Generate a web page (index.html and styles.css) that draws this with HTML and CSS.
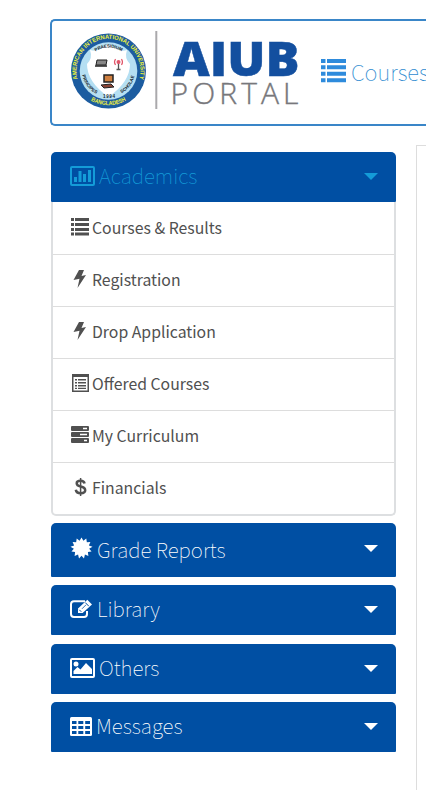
FILE: index.html
```html
<!DOCTYPE html>
<html lang="en">
<head>
<meta charset="utf-8">
<title>AIUB Portal</title>
<link rel="stylesheet" href="styles.css">
</head>
<body>
<header class="navbar">
  <svg class="brand" viewBox="68 28 236 84" role="img" aria-label="AIUB Portal">
    <defs>
      <path id="ring-top" d="M78.500 82A32 32 0 1 1 138.500 82"/>
      <path id="ring-bottom" d="M83.500 94.500A34.500 34.500 0 0 0 133.500 94.500"/>
      <path id="inner-top" d="M92 54.500A23 23 0 0 1 125 54.500"/>
      <path id="inner-left" d="M82 72A27 27 0 0 0 99 95"/>
      <path id="inner-right" d="M118 95A27 27 0 0 0 135 72"/>
    </defs>
    <circle cx="108.500" cy="71" r="37.500" fill="#1c5ca0"/>
    <circle cx="108.500" cy="71" r="28.800" fill="#b5dff2"/>
    <path d="M108.500 44L115 48Q121 52 127 50Q124 58 130 64Q130 82 108.500 97Q87 82 87 64Q93 58 90 50Q97 52 102 48Z" fill="#fff"/>
    <text class="ring"><textPath href="#ring-top" startOffset="50%" text-anchor="middle" textLength="117" lengthAdjust="spacingAndGlyphs">AMERICAN INTERNATIONAL UNIVERSITY</textPath></text>
    <text class="ring"><textPath href="#ring-bottom" startOffset="50%" text-anchor="middle" textLength="37" lengthAdjust="spacingAndGlyphs">BANGLADESH</textPath></text>
    <text class="motto"><textPath href="#inner-top" startOffset="50%" text-anchor="middle" textLength="27">PRAESIDIUM</textPath></text>
    <text class="motto"><textPath href="#inner-left" startOffset="50%" text-anchor="middle" textLength="24">PRINCIPES</textPath></text>
    <text class="motto"><textPath href="#inner-right" startOffset="50%" text-anchor="middle" textLength="22">SCHOLAE</textPath></text>
    <text class="motto" x="103" y="98" textLength="12">1994</text>
    <path d="M97 60h10l-1 5h-10z" fill="#888" stroke="#222"/><path d="M95 66h12" stroke="#222" stroke-width="1.600"/>
    <path d="M118.500 62v8M116.500 69.500h4" stroke="#555" stroke-width="1.300"/>
    <circle cx="118.500" cy="62" r="2" fill="#e0566a"/><path d="M115.500 59q-2 3 0 6M121.500 59q2 3 0 6" fill="none" stroke="#e0566a" stroke-width="1.200"/>
    <path d="M104 75h9v7h-9z" fill="#d08040" stroke="#222" stroke-width="1.500"/><path d="M101 85l10-1 3 3-10 1z" fill="#8b4434" stroke="#222"/>
    <path d="M156.300 31v78" stroke="#aaa9ac" stroke-width="2"/>
    <text class="logo-name" x="173" y="75.500" textLength="126.500" lengthAdjust="spacingAndGlyphs">AIUB</text>
    <text class="logo-sub" x="170.500" y="103.500" textLength="128">PORTAL</text>
  </svg>
  <a class="nav-link">
    <svg class="nav-icon" viewBox="0 0 25 24" fill="#2e8bdc"><path d="M0 0h4.500v4H0zM6 0h19v4H6zM0 6.300h4.500v4H0zM6 6.300h19v4H6zM0 12.800h4.500v4H0zM6 12.800h19v4H6zM0 19.300h4.500v4H0zM6 19.300h19v4H6z"/></svg>
    <span>Courses</span>
  </a>
</header>
<div class="layout">
  <nav class="sidebar">
    <section class="panel open">
      <h2 class="heading active">
        <svg class="w25" viewBox="0 0 25 20"><rect x="1" y="1" width="23" height="18" rx="1" fill="none" stroke="currentColor" stroke-width="2"/><path d="M4 11h3v5H4zM8.500 5h3v11h-3zM13 8h3v8h-3zM18 4h3v12h-3z" fill="currentColor"/></svg>
        <span class="title">Academics</span><i class="caret"></i>
      </h2>
      <ul class="menu">
        <li><svg viewBox="0 0 19 18"><path d="M1 0h3v3H1zM5 0h14v3H5zM1 5h3v3H1zM5 5h14v3H5zM1 10h3v3H1zM5 10h14v3H5zM1 14.500h3v3H1zM5 14.500h14v3H5z"/></svg><span>Courses &amp; Results</span></li>
        <li><svg viewBox="0 0 19 18"><path d="M9 0h5l-2.500 6 4.500-1L7.500 18l2-9.300L3.500 10z"/></svg><span>Registration</span></li>
        <li><svg viewBox="0 0 19 18"><path d="M9 0h5l-2.500 6 4.500-1L7.500 18l2-9.300L3.500 10z"/></svg><span>Drop Application</span></li>
        <li><svg viewBox="0 0 19 18"><path fill-rule="evenodd" d="M2 0h17v18H2zM3.500 3v13.500h14V3z"/><path d="M5 5h2v1.500H5zM8 5h8v1.500H8zM5 8h2v1.500H5zM8 8h8v1.500H8zM5 11h2v1.500H5zM8 11h8v1.500H8zM5 13.800h2v1.300H5zM8 13.800h8v1.300H8z"/></svg><span>Offered Courses</span></li>
        <li><svg viewBox="0 0 19 18"><rect x="1" y="0" width="18" height="5" rx="1"/><rect x="1" y="6" width="18" height="5" rx="1"/><rect x="1" y="12" width="18" height="5" rx="1"/><path d="M13 2.500h4M10 8.500h7M14 14.500h3" stroke="#fff" stroke-width="1.300"/></svg><span>My Curriculum</span></li>
        <li><svg viewBox="0 0 19 18"><path d="M14.600 5.500Q13.900 2.800 10.700 2.800Q6.700 2.800 6.700 5.300Q6.700 7.800 10.700 8.600Q15.200 9.500 15.200 12.300Q15.200 15.200 10.800 15.200Q6.300 15.200 5.800 11.700" fill="none" stroke="#505050" stroke-width="2.500"/><path d="M10.600 0v18" stroke="#505050" stroke-width="1.500"/></svg><span>Financials</span></li>
      </ul>
    </section>
    <h2 class="heading tall">
      <svg class="w23" viewBox="-11.500 -11.500 23 23"><path fill="#fff" d="M0-11L2-7.500 5-10 5.600-5.900 9.300-6.300 7.700-2.500 11.500-1.300 8 .8 10.500 3.700 6.700 4.300 7.200 8.300 3.600 6.900 2.600 11 0 8-2.600 11-3.600 6.900-7.200 8.300-6.700 4.300-10.500 3.700-8 .8-11.500-1.300-7.700-2.500-9.300-6.300-5.600-5.900-5-10-2-7.500Z"/></svg>
      <span class="title">Grade Reports</span><i class="caret"></i>
    </h2>
    <h2 class="heading library">
      <svg class="w23" viewBox="0 0 23 20"><path d="M15 2.200H4Q1 2.200 1 5.200V15Q1 18 4 18H14Q17 18 17 15V12" fill="none" stroke="#fff" stroke-width="2"/><path fill="#fff" d="M8 9.500L17.300.8 22 5.500 12.600 14H8z"/><path d="M15.300 3.600l3.500 3.600M9.300 10.800l2 2" stroke="#004fa3"/><path d="M12 9.800l4-4" stroke="#004fa3" stroke-width=".8"/></svg>
      <span class="title">Library</span><i class="caret"></i>
    </h2>
    <h2 class="heading">
      <svg class="w25" viewBox="0 0 25 20"><rect x="1" y="1" width="23" height="18" rx="1" fill="none" stroke="#fff" stroke-width="2"/><circle cx="6" cy="6" r="2.500" fill="#fff"/><path fill="#fff" d="M3.500 16v-3l4-4 3 2.500L16 5l6 6v5z"/></svg>
      <span class="title">Others</span><i class="caret"></i>
    </h2>
    <h2 class="heading">
      <svg class="w22" viewBox="0 0 22 19"><rect width="22" height="19" rx="1.500" fill="#fff"/><path fill="#004fa3" d="M2 4h4.500v3H2zM8.300 4h5v3h-5zM15.200 4H20v3h-4.800zM2 9h4.500v3H2zM8.300 9h5v3h-5zM15.200 9H20v3h-4.800zM2 14h4.500v3H2zM8.300 14h5v3h-5zM15.200 14H20v3h-4.800z"/></svg>
      <span class="title">Messages</span><i class="caret"></i>
    </h2>
  </nav>
  <main class="content"></main>
</div>
</body>
</html>
```
FILE: styles.css
```css
* { box-sizing: border-box; }
html { height: 100%; }
body {
  margin: 0;
  height: 790px;
  overflow: hidden;
  background: #fff;
  padding: 19px 0 0 50px;
  font-family: "Noto Sans CJK SC", "Open Sans", sans-serif;
  color: #505050;
}
.navbar {
  display: flex;
  align-items: flex-start;
  width: 376px;
  height: 107px;
  border: 2px solid #3a86c8;
  border-right: 0;
  border-radius: 5px 0 0 5px;
  padding: 7px 0 0 16px;
  overflow: hidden;
}
.brand { flex: none; width: 236px; height: 84px; }
.ring { font: bold 6px "Liberation Sans", sans-serif; fill: #eef23c; }
.motto { font: bold 4.500px "Liberation Sans", sans-serif; fill: #16242c; }
.logo-name { font: 800 48.500px "Open Sans", sans-serif; fill: #134f9f; stroke: #134f9f; stroke-width: .5px; }
.logo-sub { font: 300 30px "Open Sans", sans-serif; fill: #77777b; stroke: #77777b; stroke-width: .4px; }
.nav-link {
  display: flex;
  align-items: center;
  gap: 5px;
  margin: 28px 0 0 17px;
  height: 30px;
  font-size: 22px;
  font-weight: 100;
  color: #2e8bd0;
}
.nav-icon { width: 25px; height: 24px; flex: none; }
.layout { display: flex; gap: 20px; margin-top: 19px; width: 376px; overflow: hidden; }
.sidebar {
  display: flex;
  flex-direction: column;
  gap: 8px;
  width: 346px;
  padding: 7px 0 0 1px;
  flex: none;
}
.panel { height: 363px; }
.heading {
  display: flex;
  align-items: center;
  height: 50px;
  margin: 0;
  padding: 0 18px 2px 19px;
  background: #004fa3;
  border-radius: 5px 5px 1px 1px;
  color: #fff;
  font-size: 20.600px;
  line-height: 30px;
  font-weight: 100;
}
.heading.active { color: #149cd8; }
.heading.tall { height: 54px; padding-bottom: 4px; }
.heading.library { margin-bottom: 1px; }
.heading svg { flex: none; }
.w25 { width: 25px; height: 20px; }
.w23 { width: 23px; height: 22px; }
.w22 { width: 22px; height: 19px; }
.title { flex: 1; margin: -3px 0 0 4px; white-space: nowrap; }
.tall .title { margin-top: 2px; }
.library .title { margin-top: -2px; }
.caret {
  width: 0;
  height: 0;
  border: 7px solid transparent;
  border-top-color: currentColor;
  border-bottom: 0;
}
.menu {
  list-style: none;
  margin: 0;
  padding: 0;
  height: 314px;
  border: 2px solid #dddfe1;
  border-top: 0;
  border-radius: 0 0 5px 5px;
}
.menu li {
  display: flex;
  align-items: center;
  height: 52px;
  padding: 0 0 3px 17px;
  border-top: 1px solid #ddd;
  font-size: 15.800px;
}
.menu li:first-child { border-top-color: transparent; }
.menu svg { width: 19px; height: 18px; margin-right: 3px; fill: #505050; flex: none; }
.content { width: 10px; height: 660px; flex: none; border: 1px solid #ddd; border-right: 0; }
```
